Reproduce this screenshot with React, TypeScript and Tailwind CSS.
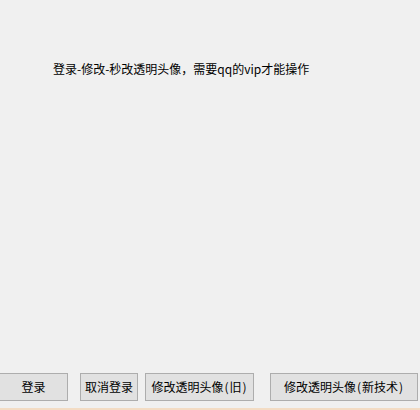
import React from "react";

const font = { fontFamily: '"SimSun", "Noto Sans CJK SC", sans-serif' };

const P = ({ c }: { c: string }) => (
  <span className="inline-block w-[6px] text-center">{c}</span>
);

export default function App() {
  const btn =
    "h-[28px] border border-[#adadad] bg-[#e1e1e1] text-[12px] text-black flex items-center justify-center leading-none whitespace-nowrap";
  return (
    <div
      className="w-[420px] h-[410px] bg-[#f0f0f0] flex flex-col overflow-hidden"
      style={font}
    >
      <div className="pt-[61px] pl-[53px] text-[12px] leading-[16px] text-black whitespace-nowrap">
        登录-修改-秒改透明头像，需要qq的vip才能操作
      </div>
      <div className="flex-1" />
      <div className="flex items-start h-[28px]">
        <button className={`${btn} w-[68px] border-l-0`}>登录</button>
        <button className={`${btn} w-[58px] ml-[12px]`}>取消登录</button>
        <button className={`${btn} w-[109px] ml-[7px]`}>
          修改透明头像<P c="(" />旧<P c=")" />
        </button>
        <button className={`${btn} w-[148px] ml-[16px]`}>
          修改透明头像<P c="(" />新技术<P c=")" />
        </button>
      </div>
      <div className="h-[7px]" />
      <div className="h-[2px] bg-[#f3dcc4]" />
    </div>
  );
}
